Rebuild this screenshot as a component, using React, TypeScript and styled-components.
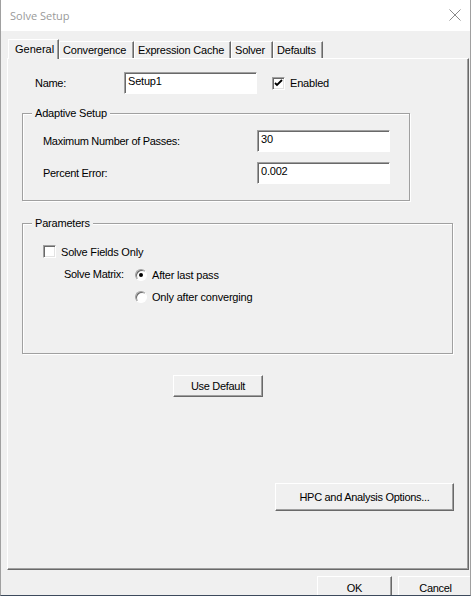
import React from "react";
import styled, { createGlobalStyle } from "styled-components";

const Global = createGlobalStyle`
  html, body { margin: 0; padding: 0; background: #f0f0f0; }
  body { font-family: "Liberation Sans", Arial, sans-serif; font-size: 11px; color: #000; }
  * { box-sizing: border-box; }
`;

const Window = styled.div`
  width: 471px;
  height: 596px;
  display: flex;
  flex-direction: column;
  background: #f0f0f0;
  border-left: 1px solid #a0a0a0;
  border-right: 1px solid #a0a0a0;
  border-bottom: 1px solid #3c4a5c;
  overflow: hidden;
`;

const TitleBar = styled.div`
  height: 31px;
  flex: none;
  background: #fff;
  display: flex;
  align-items: center;
  justify-content: space-between;
  padding: 0 9px 1px 9px;
  margin-left: -1px;
  border-left: 1px solid #6e2f52;
`;

const Title = styled.span`
  font-family: "Open Sans", "Noto Sans", sans-serif;
  font-size: 11px;
  color: #9a9a9a;
`;

const Body = styled.div`
  flex: 1;
  display: flex;
  flex-direction: column;
  padding: 8px 1px 0 6px;
`;

const TabStrip = styled.div`
  display: flex;
  align-items: flex-end;
  height: 19px;
  padding-left: 1px;
  position: relative;
  z-index: 1;
`;

const Tab = styled.div<{ $active?: boolean; $w: number }>`
  width: ${(p) => p.$w}px;
  height: ${(p) => (p.$active ? 20 : 17)}px;
  margin-bottom: ${(p) => (p.$active ? -1 : 0)}px;
  background: #f0f0f0;
  border-top: 1px solid #fff;
  border-left: 1px solid #fff;
  border-right: 1px solid #696969;
  box-shadow: inset -1px 0 0 #a0a0a0;
  display: flex;
  align-items: ${(p) => (p.$active ? "flex-start" : "center")};
  padding-top: ${(p) => (p.$active ? 3 : 0)}px;
  padding-left: ${(p) => (p.$active ? 6 : 3)}px;
  white-space: nowrap;
  letter-spacing: ${(p) => (p.$active ? 0 : -0.2)}px;
`;

const Panel = styled.div`
  height: 512px;
  width: 462px;
  border-top: 1px solid #fff;
  border-left: 1px solid #fff;
  border-right: 1px solid #696969;
  border-bottom: 1px solid #696969;
  box-shadow: inset -1px -1px 0 #a0a0a0;
  display: flex;
  flex-direction: column;
  padding: 13px 0 0 14px;
`;

const Row = styled.div<{ $indent?: number }>`
  display: flex;
  align-items: center;
  padding-left: ${(p) => p.$indent ?? 0}px;
`;

const Label = styled.span<{ $w?: number }>`
  width: ${(p) => (p.$w ? `${p.$w}px` : "auto")};
  flex: none;
  white-space: nowrap;
  letter-spacing: -0.3px;
`;

const TextBox = styled.div`
  width: 133px;
  height: 22px;
  background: #fff;
  border-top: 1px solid #a0a0a0;
  border-left: 1px solid #a0a0a0;
  border-right: 1px solid #fff;
  border-bottom: 1px solid #fff;
  box-shadow: inset 1px 1px 0 #696969;
  padding: 2px 0 0 3px;
  letter-spacing: -0.2px;
`;

const Box = styled.span<{ $ml?: number }>`
  width: 13px;
  height: 13px;
  flex: none;
  margin-left: ${(p) => p.$ml ?? 0}px;
  background: #fff;
  border-top: 1px solid #a0a0a0;
  border-left: 1px solid #a0a0a0;
  border-right: 1px solid #fff;
  border-bottom: 1px solid #fff;
  box-shadow: inset 1px 1px 0 #696969, inset -1px -1px 0 #e3e3e3;
  display: flex;
  align-items: center;
  justify-content: center;
`;

const BoxLabel = styled.span`
  margin-left: 5px;
  letter-spacing: -0.2px;
  white-space: nowrap;
`;

const Group = styled.div<{ $w: number; $h: number; $mt: number }>`
  position: relative;
  width: ${(p) => p.$w}px;
  height: ${(p) => p.$h}px;
  margin-top: ${(p) => p.$mt}px;
  border: 1px solid #a0a0a0;
  box-shadow: 1px 1px 0 #fff, inset 1px 1px 0 #fff;
  display: flex;
  flex-direction: column;
`;

const Caption = styled.span`
  position: absolute;
  left: 9px;
  top: -7px;
  padding: 0 3px;
  background: #f0f0f0;
  line-height: 13px;
  letter-spacing: -0.2px;
`;

const FormRows = styled.div`
  display: flex;
  flex-direction: column;
  gap: 10px;
  padding: 16px 0 0 20px;
`;

const ParamBody = styled.div`
  display: flex;
  flex-direction: column;
  padding: 21px 0 0 20px;
`;

const MatrixRow = styled.div`
  display: flex;
  margin-top: 10px;
  padding-left: 21px;
`;

const RadioList = styled.div`
  display: flex;
  flex-direction: column;
  gap: 9px;
`;

const RadioRow = styled.div`
  display: flex;
  align-items: center;
  height: 13px;
`;

const Radio = styled.span<{ $on?: boolean }>`
  width: 12px;
  height: 12px;
  flex: none;
  border-radius: 50%;
  background: #fff;
  border: 1px solid;
  border-color: #a0a0a0 #fff #fff #a0a0a0;
  box-shadow: inset 1px 1px 0 #696969;
  display: flex;
  align-items: center;
  justify-content: center;
  &::after {
    content: "";
    width: 4px;
    height: 4px;
    border-radius: 50%;
    background: ${(p) => (p.$on ? "#000" : "transparent")};
  }
`;

const Button = styled.div<{ $w: number; $h: number; $ml?: number; $mt?: number }>`
  width: ${(p) => p.$w}px;
  height: ${(p) => p.$h}px;
  margin-left: ${(p) => p.$ml ?? 0}px;
  margin-top: ${(p) => p.$mt ?? 0}px;
  flex: none;
  background: #f0f0f0;
  border-top: 1px solid #fff;
  border-left: 1px solid #fff;
  border-right: 1px solid #696969;
  border-bottom: 1px solid #696969;
  box-shadow: inset -1px -1px 0 #a0a0a0;
  display: flex;
  align-items: center;
  justify-content: center;
  letter-spacing: -0.3px;
  white-space: nowrap;
`;

const Footer = styled.div`
  display: flex;
  justify-content: flex-end;
  gap: 6px;
  margin-top: 6px;
  margin-right: -4px;
`;

const Check = () => (
  <svg width="9" height="9" viewBox="0 0 9 9">
    <path d="M1 4 L3 6 L8 1" fill="none" stroke="#000" strokeWidth="1.8" />
  </svg>
);

const CloseIcon = () => (
  <svg width="12" height="12" viewBox="0 0 12 12">
    <path d="M0.5 0.5 L11.5 11.5 M11.5 0.5 L0.5 11.5" stroke="#8a8a8a" strokeWidth="1" />
  </svg>
);

const tabs: [string, number][] = [
  ["General", 51],
  ["Convergence", 75],
  ["Expression Cache", 97],
  ["Solver", 42],
  ["Defaults", 50],
];

export default function App() {
  return (
    <>
      <Global />
      <Window>
        <TitleBar>
          <Title>Solve Setup</Title>
          <CloseIcon />
        </TitleBar>
        <Body>
          <TabStrip>
            {tabs.map(([t, w], i) => (
              <Tab key={t} $active={i === 0} $w={w}>
                {t}
              </Tab>
            ))}
          </TabStrip>
          <Panel>
            <Row $indent={13}>
              <Label $w={89}>Name:</Label>
              <TextBox>Setup1</TextBox>
              <Box $ml={15}>
                <Check />
              </Box>
              <BoxLabel>Enabled</BoxLabel>
            </Row>
            <Group $w={388} $h={88} $mt={19}>
              <Caption>Adaptive Setup</Caption>
              <FormRows>
                <Row>
                  <Label $w={214}>Maximum Number of Passes:</Label>
                  <TextBox>30</TextBox>
                </Row>
                <Row>
                  <Label $w={214}>Percent Error:</Label>
                  <TextBox>0.002</TextBox>
                </Row>
              </FormRows>
            </Group>
            <Group $w={431} $h={131} $mt={22}>
              <Caption>Parameters</Caption>
              <ParamBody>
                <Row>
                  <Box />
                  <BoxLabel>Solve Fields Only</BoxLabel>
                </Row>
                <MatrixRow>
                  <Label $w={71}>Solve Matrix:</Label>
                  <RadioList>
                    <RadioRow>
                      <Radio $on />
                      <BoxLabel>After last pass</BoxLabel>
                    </RadioRow>
                    <RadioRow>
                      <Radio />
                      <BoxLabel>Only after converging</BoxLabel>
                    </RadioRow>
                  </RadioList>
                </MatrixRow>
              </ParamBody>
            </Group>
            <Button $w={90} $h={22} $ml={151} $mt={21}>
              Use Default
            </Button>
            <Button $w={179} $h={28} $ml={253} $mt={86}>
              HPC and Analysis Options...
            </Button>
          </Panel>
          <Footer>
            <Button $w={75} $h={23}>OK</Button>
            <Button $w={75} $h={23}>Cancel</Button>
          </Footer>
        </Body>
      </Window>
    </>
  );
}
